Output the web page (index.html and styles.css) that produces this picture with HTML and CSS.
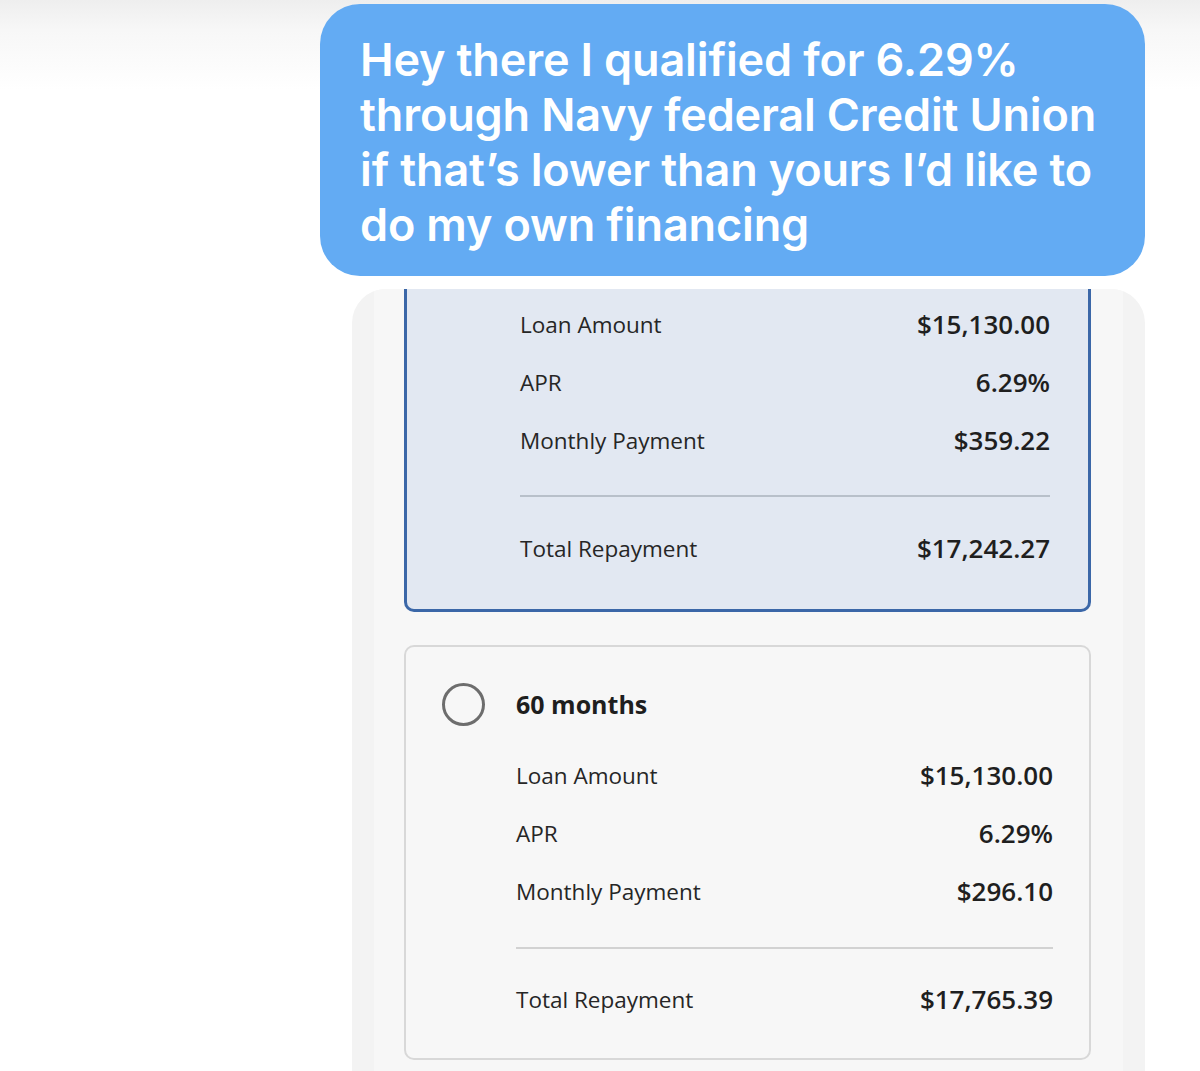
FILE: index.html
```html
<!DOCTYPE html>
<html>
<head>
<meta charset="utf-8">
<link rel="stylesheet" href="styles.css">
</head>
<body>
<div class="page">
  <div class="bubble-row">
    <div class="bubble">Hey there I qualified for 6.29% through Navy federal Credit Union if that’s lower than yours I’d like to do my own financing</div>
  </div>
  <div class="shot">
    <div class="shot-inner">
      <div class="option selected">
        <div class="details">
          <div class="row"><span class="label">Loan Amount</span><span class="value">$15,130.00</span></div>
          <div class="row"><span class="label">APR</span><span class="value">6.29%</span></div>
          <div class="row"><span class="label">Monthly Payment</span><span class="value">$359.22</span></div>
          <div class="divider"></div>
          <div class="row"><span class="label">Total Repayment</span><span class="value">$17,242.27</span></div>
        </div>
      </div>
      <div class="option plain">
        <div class="title-row">
          <span class="radio"></span>
          <span class="title">60 months</span>
        </div>
        <div class="details">
          <div class="row"><span class="label">Loan Amount</span><span class="value">$15,130.00</span></div>
          <div class="row"><span class="label">APR</span><span class="value">6.29%</span></div>
          <div class="row"><span class="label">Monthly Payment</span><span class="value">$296.10</span></div>
          <div class="divider"></div>
          <div class="row"><span class="label">Total Repayment</span><span class="value">$17,765.39</span></div>
        </div>
      </div>
    </div>
  </div>
</div>
</body>
</html>
```
FILE: styles.css
```css
html, body {
  margin: 0;
  padding: 0;
  background: #ffffff;
}
body {
  width: 1200px;
  height: 1071px;
  overflow: hidden;
  background: linear-gradient(to bottom, #eeeeee 0px, #f7f7f7 30px, #ffffff 90px);
}
.page {
  display: flex;
  flex-direction: column;
  padding-top: 4px;
}
.bubble-row {
  padding-left: 320px;
}
.bubble {
  width: 825px;
  box-sizing: border-box;
  height: 272px;
  background: #63abf3;
  border-radius: 40px;
  color: #ffffff;
  font-family: Inter, "Liberation Sans", sans-serif;
  font-weight: 600;
  font-size: 45px;
  line-height: 55px;
  letter-spacing: -0.15px;
  padding: 28px 30px 0 40px;
}
.shot {
  margin-left: 352px;
  width: 793px;
  margin-top: 13px;
  height: 790px;
  background: #f3f3f3;
  border-radius: 34px 34px 0 0;
  padding: 0 22px;
  box-sizing: border-box;
  overflow: hidden;
}
.shot-inner {
  background: #f7f7f7;
  height: 100%;
  padding-left: 30px;
  padding-right: 32px;
  font-family: "Open Sans", "Noto Sans", sans-serif;
  color: #232323;
}
.option {
  box-sizing: border-box;
  width: 687px;
  margin-left: 0;
  border-radius: 0 0 10px 10px;
}
.selected {
  background: #e2e8f2;
  border: 3px solid #3b67a8;
  border-top: none;
  padding: 6px 38px 32px 113px;
}
.plain {
  margin-top: 33px;
  background: #f7f7f7;
  border: 2px solid #d8d8d8;
  border-radius: 10px;
  padding: 28px 36px 30px 36px;
}
.title-row {
  display: flex;
  align-items: center;
  height: 58px;
  gap: 31px;
  margin-bottom: 13px;
}
.radio {
  width: 43px;
  height: 43px;
  box-sizing: border-box;
  border: 3px solid #6d6d6d;
  border-radius: 50%;
  flex: none;
}
.title {
  font-size: 25px;
  font-weight: 700;
  color: #1e1e1e;
}
.plain .details {
  margin-left: 74px;
}
.row {
  display: flex;
  justify-content: space-between;
  align-items: center;
  height: 58px;
}
.label {
  font-size: 22.5px;
  color: #262626;
}
.value {
  font-size: 26px;
  font-weight: 600;
  color: #1f1f1f;
}
.divider {
  height: 2px;
  background: #b8c0ca;
  margin: 26px 0 22px;
}
.plain .divider {
  background: #d2d2d2;
  margin: 27px 0 21px;
}
```
